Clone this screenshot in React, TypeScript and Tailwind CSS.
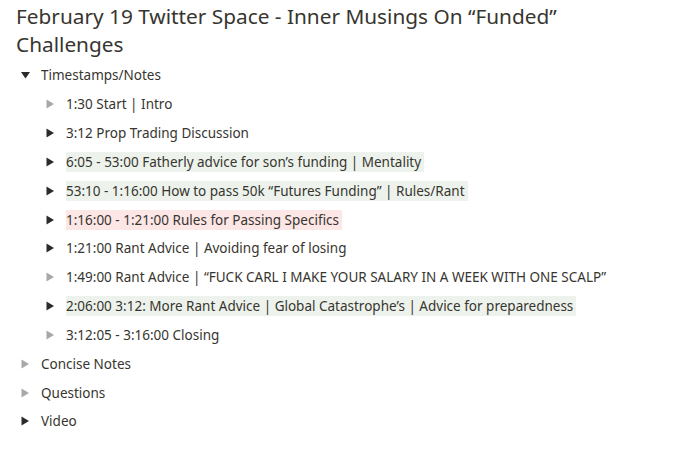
const items: { text: string; bg?: 'green' | 'red'; empty?: boolean }[] = [
  { text: '1:30 Start | Intro', empty: true },
  { text: '3:12 Prop Trading Discussion' },
  { text: '6:05 - 53:00 Fatherly advice for son’s funding | Mentality', bg: 'green' },
  { text: '53:10 - 1:16:00 How to pass 50k “Futures Funding” | Rules/Rant', bg: 'green' },
  { text: '1:16:00 - 1:21:00 Rules for Passing Specifics', bg: 'red' },
  { text: '1:21:00 Rant Advice | Avoiding fear of losing' },
  { text: '1:49:00 Rant Advice | “FUCK CARL I MAKE YOUR SALARY IN A WEEK WITH ONE SCALP”', empty: true },
  { text: '2:06:00 3:12: More Rant Advice | Global Catastrophe’s | Advice for preparedness', bg: 'green' },
  { text: '3:12:05 - 3:16:00 Closing', empty: true },
];

function Arrow({ down, empty }: { down?: boolean; empty?: boolean }) {
  const fill = empty ? 'fill-[#a8a8a8]' : 'fill-[#2b2b2b]';
  if (down) {
    return (
      <svg width="9" height="8" viewBox="0 0 9 8" className={fill}>
        <path d="M0 1h9L4.5 7.5z" />
      </svg>
    );
  }
  return (
    <svg width="8" height="10" viewBox="0 0 8 10" className={fill}>
      <path d="M0.5 0.5v9L8 5z" />
    </svg>
  );
}

function Row({ text, bg, empty, down }: { text: string; bg?: 'green' | 'red'; empty?: boolean; down?: boolean }) {
  const bgClass = bg === 'green' ? 'bg-[#edf3ec]' : bg === 'red' ? 'bg-[#fde6e6]' : '';
  return (
    <div className="flex items-center h-[28.83px]">
      <div className="w-[25px] pl-[5px] flex items-center shrink-0">
        <Arrow down={down} empty={empty} />
      </div>
      <span className={`leading-[20px] pr-[3px] ${bgClass}`}>{text}</span>
    </div>
  );
}

export default function App() {
  return (
    <div
      className="w-[695px] h-[451px] bg-white text-[#37352f] pl-[16px] pt-[2px] overflow-hidden"
      style={{ fontFamily: '"Noto Sans", "Open Sans", sans-serif' }}
    >
      <h1 className="w-[600px] text-[20.8px] leading-[28px] font-normal">
        February 19 Twitter Space - Inner Musings On “Funded” Challenges
      </h1>
      <div className="mt-[3px] text-[13.5px]">
        <Row text="Timestamps/Notes" down />
        <div className="pl-[25px]">
          {items.map((it) => (
            <Row key={it.text} text={it.text} bg={it.bg} empty={it.empty} />
          ))}
        </div>
        <Row text="Concise Notes" empty />
        <Row text="Questions" empty />
        <Row text="Video" />
      </div>
    </div>
  );
}
